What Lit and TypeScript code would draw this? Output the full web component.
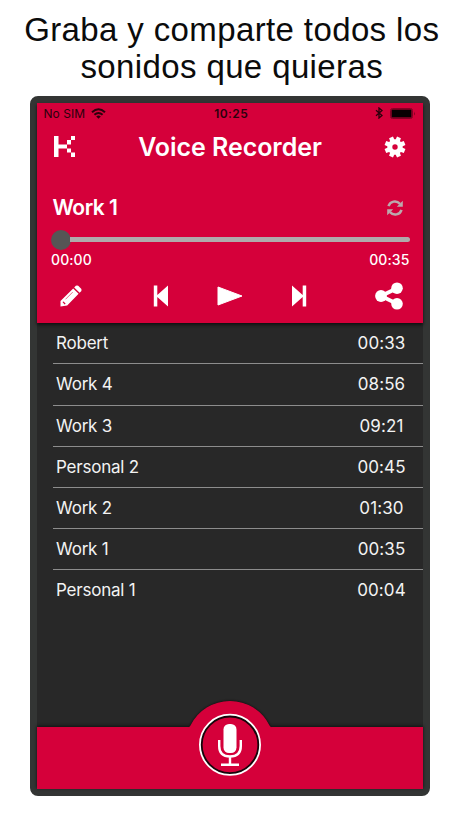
import { LitElement, html, svg, css } from "lit";
import { customElement, property } from "lit/decorators.js";

const TEETH = [0, 45, 90, 135, 180, 225, 270, 315];

@customElement("recording-row")
class RecordingRow extends LitElement {
  @property() name = "";
  @property() time = "";
  static styles = css`
    :host { display: flex; justify-content: space-between; align-items: center; box-sizing: border-box;
      height: 41.2px; margin-left: 16px; padding: 0 17.5px 0 3px; border-bottom: 1px solid #8d8d8d;
      color: #f3f3f3; font-size: 17px; line-height: 20px; }
    :host(.last) { border-bottom-color: transparent; }
    .name { letter-spacing: -0.22px; }
    .time { letter-spacing: 0.1px; width: 48px; display: flex; justify-content: center; white-space: nowrap; }
  `;
  render() {
    return html`<span class="name">${this.name}</span><span class="time">${this.time}</span>`;
  }
}

@customElement("app-root")
class AppRoot extends LitElement {
  recordings = [
    ["Robert", "00:33"], ["Work 4", "08:56"], ["Work 3", "09:21"], ["Personal 2", "00:45"],
    ["Work 2", "01:30"], ["Work 1", "00:35"], ["Personal 1", "00:04"],
  ];

  static styles = css`
    :host { display: flex; flex-direction: column; align-items: center; box-sizing: border-box; width: 460px; height: 818px;
      background: #fff; font-family: Inter, "Liberation Sans", sans-serif; overflow: hidden; }
    svg { display: block; flex: none; }
    .headline { margin: 0; padding: 11px 0 0 3.5px; height: 84.5px; box-sizing: content-box; font: 400 33px/37px "Liberation Sans", sans-serif;
      letter-spacing: 0.38px; text-align: center; color: #0b0b0b; white-space: nowrap; }
    .phone { display: flex; flex-direction: column; box-sizing: border-box; width: 400px; height: 700.5px;
      border: 7px solid #333534; border-radius: 8px; background: #282828; }
    .player { height: 220.5px; background: #d5003a; box-shadow: 0 2px 3px #101010; position: relative; flex: none; }
    .status { display: grid; grid-template-columns: 1fr auto 1fr; align-items: center; height: 21px; padding: 0 7px 0 6.5px; color: #2b000c; font-size: 12px; }
    .carrier { display: flex; align-items: center; gap: 6px; letter-spacing: 0.05px; }
    .clock { font-weight: 600; letter-spacing: 0.4px; padding-left: 3px; }
    .indicators { display: flex; justify-content: flex-end; align-items: center; gap: 7px; }
    .nav { display: flex; align-items: center; justify-content: space-between; height: 46px; padding: 0 17px; color: #fff; }
    .app-title { margin: 0; font-size: 25px; font-weight: 600; line-height: 30px; letter-spacing: -0.05px; white-space: nowrap; }
    .track { display: flex; justify-content: space-between; align-items: center; height: 24px; margin-top: 26px; padding: 0 20px 0 15.5px; color: #fff; }
    .track-name { font-size: 21px; font-weight: 600; line-height: 24px; letter-spacing: -0.5px; }
    .slider { display: flex; align-items: center; height: 20px; margin: 10px 13.5px 0 14px; }
    .knob { width: 20px; height: 20px; border-radius: 50%; background: #555; flex: none; }
    .rail { height: 5.5px; flex: 1; margin-left: -1px; border-radius: 0 3px 3px 0; background: #b0aaab; }
    .times { display: flex; justify-content: space-between; padding: 1.5px 13.5px 0 14px; color: #fff; font-size: 14px; font-weight: 500; line-height: 17px; letter-spacing: 0.1px; }
    .controls { display: grid; grid-template-columns: 22px 1fr 28px; align-items: center; height: 30px; margin-top: 12.5px; padding: 0 20px 0 23px; }
    .transport { display: flex; align-items: center; justify-content: center; gap: 48px; padding-left: 3px; }
    .list { flex: 1; padding-top: 0.2px; }
    .footer { height: 62px; background: #d5003a; position: relative; box-shadow: 0 -1px 3px #101010; flex: none; display: flex; justify-content: center; }
    .record { position: absolute; bottom: 0; }
  `;

  render() {
    return html`
      <h1 class="headline">Graba y comparte todos los<br>sonidos que quieras</h1>
      <main class="phone">
        <section class="player">
          <div class="status">
            <span class="carrier">No SIM
              <svg width="15" height="11" viewBox="0 0 15 11" fill="none" stroke="currentColor" stroke-width="2">
                <path d="M1 4.2Q7.5 -1.7 14 4.2M3.4 6.8Q7.5 3.1 11.6 6.8"/>
                <path d="M7.5 10.8L5.2 8.5Q7.5 6.7 9.8 8.5Z" fill="currentColor" stroke="none"/>
              </svg>
            </span>
            <span class="clock">10:25</span>
            <span class="indicators">
              <svg width="8" height="12" viewBox="0 0 8 12" fill="none" stroke="currentColor" stroke-width="1.3"><path d="M1 3.3L7 8.5L4 11V1L7 3.5L1 8.7"/></svg>
              <svg width="26" height="11" viewBox="0 0 26 11"><rect x=".5" y=".5" width="22" height="10" rx="2" fill="none" stroke="#850024"/><rect x="1.5" y="1.5" width="20" height="8" rx=".5" fill="#080002"/><path d="M24 3.5Q25.8 5.5 24 7.5Z" fill="#850024"/></svg>
            </span>
          </div>
          <header class="nav">
            <svg width="22" height="22" viewBox="0 0 22 22" fill="#fff"><path d="M0 0H4.5V8.5H13V12.5H4.5V21H0ZM17 0H21V4H17ZM13 4H17V8.5H13ZM13 12.5H17V16.5H13ZM17 16.5H21V21H17Z"/></svg>
            <h2 class="app-title">Voice Recorder</h2>
            <svg width="22" height="22" viewBox="-11 -11 22 22">
              ${TEETH.map((a) => svg`<path transform=${`rotate(${a + 22.5})`} d="M-2.4 -5L-2.1 -10.4H2.1L2.4 -5Z" fill="#fff"/>`)}
              <circle r="5.2" fill="none" stroke="#fff" stroke-width="5"/>
            </svg>
          </header>
          <div class="track">
            <span class="track-name">Work 1</span>
            <svg width="16" height="16" viewBox="0 0 16 16" fill="none" stroke="#bba9ad" stroke-width="2.5">
              <path d="M1.5 6.2C3 1 9.5 0 13 3.8M14.5 9.8C13 15 6.5 16 3 12.2"/>
              <path d="M15.8 .7V6.7H9.8ZM.2 15.3V9.3H6.2Z" fill="#bba9ad" stroke="none"/>
            </svg>
          </div>
          <div class="slider"><span class="knob"></span><span class="rail"></span></div>
          <div class="times"><span>00:00</span><span>00:35</span></div>
          <div class="controls">
            <svg width="22" height="22" viewBox="0 0 22 22" fill="#fff">
              <path d="M14.2 2.4L15.8 .8Q17 0 18.2 .8L21.2 3.8Q22 5 21.2 6.200L19.600 7.800ZM13.200 3.400L18.600 8.800L7.200 20.400L.5 21.500L.5 15.900Z"/>
              <path d="M5.500 14.300L12.700 7.100" fill="none" stroke="#d5003a" stroke-width=".6"/>
              <path d="M2.500 17L3.500 16.500L5.600 18.600L4.600 19.500Z" fill="#d5003a"/>
            </svg>
            <div class="transport">
              <svg width="16" height="22" viewBox="0 0 16 22" fill="#fff"><path d="M.8 .5H4.3V10L15 .5V21.5L4.3 12V21.5H.8Z"/></svg>
              <svg width="26" height="20" viewBox="0 0 26 20"><path d="M1 1L25 10L1 19Z" fill="#fff" stroke="#fff" stroke-linejoin="round"/></svg>
              <svg width="16" height="22" viewBox="0 0 16 22" fill="#fff"><path d="M15.2 .5H11.7V10L1 .5V21.5L11.7 12V21.5H15.2Z"/></svg>
            </div>
            <svg width="28" height="28" viewBox="0 0 28 28" fill="#fff"><path d="M21.5 6.5L6 14L21.5 21.5" fill="none" stroke="#fff" stroke-width="3.8"/><circle cx="22" cy="6.2" r="5.8"/><circle cx="6" cy="14" r="5.9"/><circle cx="22" cy="21.8" r="5.8"/></svg>
          </div>
        </section>
        <section class="list">
          ${this.recordings.map(([n, t], i) => html`<recording-row class=${i === this.recordings.length - 1 ? "last" : ""} .name=${n} .time=${t}></recording-row>`)}
        </section>
        <footer class="footer">
          <svg class="record" width="100" height="94" viewBox="0 0 100 94">
            <defs><filter id="soft" x="-20%" y="-20%" width="140%" height="140%"><feGaussianBlur stdDeviation="1.5"/></filter></defs>
            <path d="M10 32A44 44 0 0 1 90 32Z" fill="#101010" filter="url(#soft)"/>
            <path d="M7 33.5Q9 33 10.5 30.5A44 44 0 0 1 89.5 30.5Q91 33 93 33.5V60H7Z" fill="#d5003a"/>
            <circle cx="50" cy="49.8" r="28.7" fill="none" stroke="#16050a" stroke-width="2.6"/>
            <circle cx="50" cy="49.8" r="30.1" fill="none" stroke="#fff" stroke-width="1.8"/>
            <rect x="43.5" y="29" width="13" height="29" rx="5.5" fill="#fff"/>
            <path d="M39.2 45V51Q39.2 61.5 50 61.5Q60.8 61.5 60.8 51V45M50 61.5V69.500M41 69.800H59" fill="none" stroke="#fff" stroke-width="2.4"/>
          </svg>
        </footer>
      </main>`;
  }
}
